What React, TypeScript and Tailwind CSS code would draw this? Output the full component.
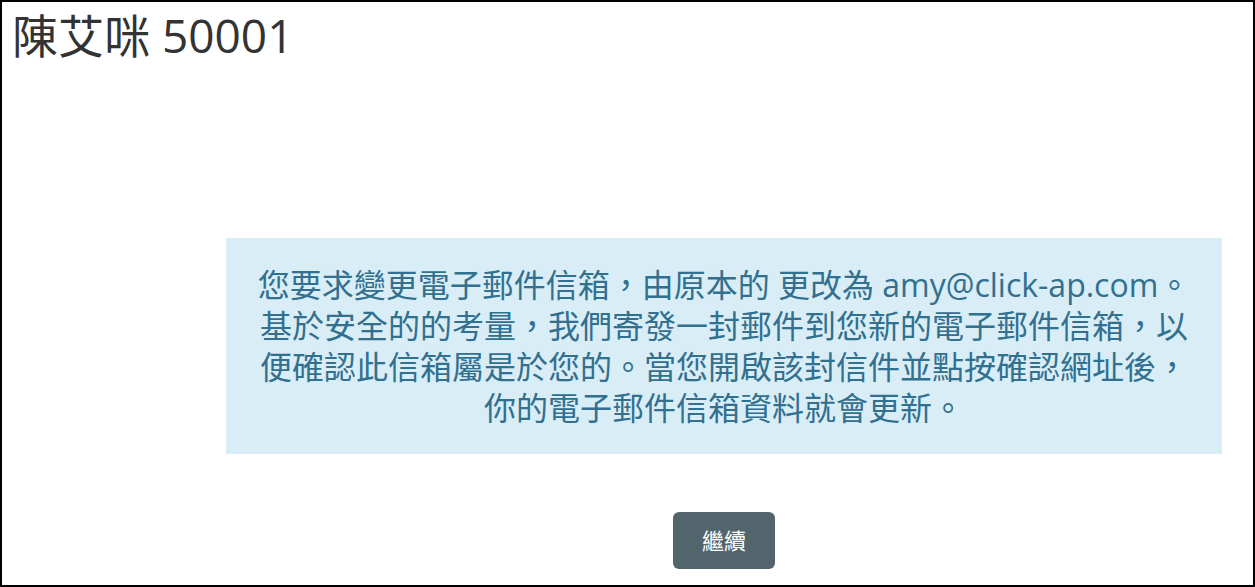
export default function App() {
    return (
        <div
            className="box-border flex h-[587px] w-full flex-col border-2 border-black bg-white"
            style={{ fontFamily: '"Open Sans", "Noto Sans CJK TC", sans-serif' }}
        >
            <h1 className="pl-[10px] pt-[6px] text-[46px] font-normal leading-[1.2] text-[#333333]">
                陳艾咪 50001
            </h1>
            <div className="ml-[224px] mt-[175px] flex w-[996px] flex-col">
                <div className="bg-[#d9edf7] py-[26px] text-center text-[32px] leading-[41px] text-[#31708f]">
                    您要求變更電子郵件信箱，由原本的 更改為 amy@click-ap.com。
                    <br />
                    基於安全的的考量，我們寄發一封郵件到您新的電子郵件信箱，以
                    <br />
                    便確認此信箱屬是於您的。當您開啟該封信件並點按確認網址後，
                    <br />
                    你的電子郵件信箱資料就會更新。
                </div>
                <div className="mt-[58px] flex justify-center">
                    <button className="h-[57px] w-[102px] rounded-[6px] bg-[#52656d] text-[22px] text-white">
                        繼續
                    </button>
                </div>
            </div>
        </div>
    );
}
